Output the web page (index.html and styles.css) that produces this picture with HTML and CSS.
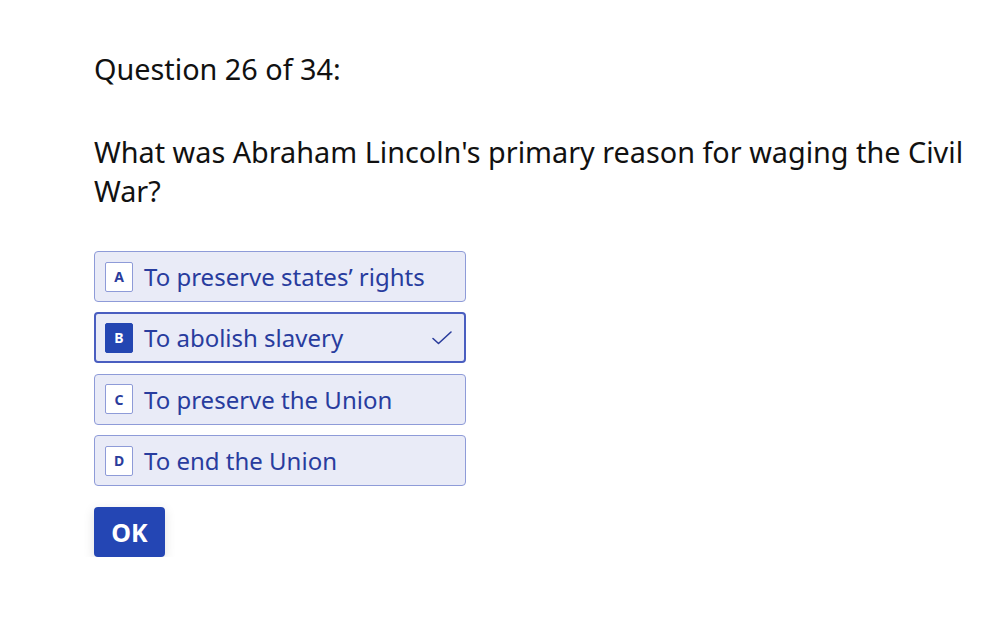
FILE: index.html
```html
<!DOCTYPE html>
<html lang="en">
<head>
<meta charset="utf-8">
<title>Quiz</title>
<link rel="stylesheet" href="styles.css">
</head>
<body>
<main class="quiz">
  <h1 class="counter">Question 26 of 34:</h1>
  <p class="question">What was Abraham Lincoln's primary reason for waging the Civil War?</p>
  <ul class="options">
    <li class="option"><span class="key">A</span><span class="label">To preserve states’ rights</span></li>
    <li class="option selected"><span class="key">B</span><span class="label">To abolish slavery</span>
      <svg class="check" width="22" height="16" viewBox="0 0 22 16"><path d="M2 8.5 L7.5 13.5 L20 2" fill="none" stroke="#2a3c9c" stroke-width="1.6" stroke-linecap="round" stroke-linejoin="round"/></svg>
    </li>
    <li class="option"><span class="key">C</span><span class="label">To preserve the Union</span></li>
    <li class="option"><span class="key">D</span><span class="label">To end the Union</span></li>
  </ul>
  <button class="ok" type="button">OK</button>
</main>
</body>
</html>
```
FILE: styles.css
```css
html, body {
  margin: 0;
  padding: 0;
  background: #ffffff;
}
body {
  font-family: "Noto Sans", "Open Sans", sans-serif;
  color: #111111;
}
.quiz {
  padding: 49px 0 0 94px;
  width: 880px;
}
.counter {
  margin: 0;
  font-size: 28.8px;
  font-weight: 400;
  line-height: 39px;
}
.question {
  margin: 44px 0 0 0;
  font-size: 28.8px;
  line-height: 39px;
}
.options {
  list-style: none;
  margin: 41px 0 0 0;
  padding: 0;
  display: flex;
  flex-direction: column;
  gap: 10.4px;
  width: 372px;
}
.option {
  box-sizing: border-box;
  height: 51px;
  display: flex;
  align-items: center;
  gap: 11px;
  padding: 0 12px 0 10px;
  background: #e9ebf7;
  border: 1px solid #8e9bd8;
  border-radius: 4px;
  color: #283c9e;
  font-size: 24px;
}
.option.selected {
  border: 2px solid #4a5ec0;
  padding: 0 11px 0 9px;
}
.key {
  box-sizing: border-box;
  width: 28px;
  height: 30px;
  flex: none;
  display: flex;
  align-items: center;
  justify-content: center;
  background: #ffffff;
  border: 1px solid #8e9bd8;
  border-radius: 2px;
  font-size: 14px;
  font-weight: 700;
  color: #2a3c9c;
}
.selected .key {
  background: #2446b2;
  border-color: #2446b2;
  color: #ffffff;
}
.label {
  flex: 1;
  white-space: nowrap;
}
.check {
  flex: none;
}
.ok {
  margin-top: 21px;
  width: 71px;
  height: 50px;
  border: none;
  border-radius: 4px;
  background: #2446b4;
  color: #ffffff;
  font-family: "Noto Sans", "Open Sans", sans-serif;
  font-size: 25px;
  font-weight: 700;
  box-shadow: 0 3px 12px rgba(0, 0, 0, 0.12);
  padding: 0;
}
```
